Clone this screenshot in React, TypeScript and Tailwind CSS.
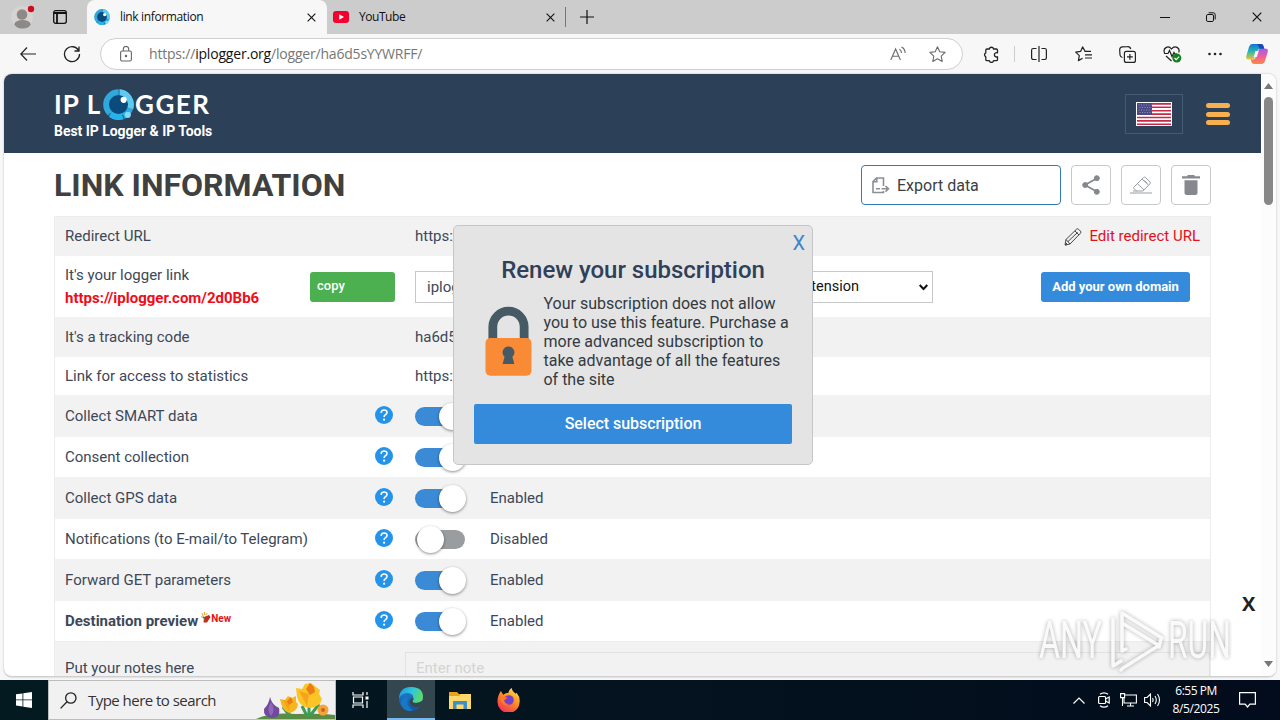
import type { ReactNode } from 'react';

const Cross = ({ size = 10 }: { size?: number }) => (
  <svg width={size} height={size} viewBox="0 0 10 10" stroke="#111" strokeWidth="1.2" fill="none">
    <path d="M.7.7l8.6 8.6M9.3.7L.7 9.3" />
  </svg>
);

const EyeLogo = ({ size }: { size: number }) => (
  <svg width={size} height={size} viewBox="0 0 30 30" className="shrink-0">
    <circle cx="15" cy="15" r="12" fill="#0b4a7c" />
    <circle cx="15" cy="15" r="12" fill="none" stroke="#2fa8dc" strokeWidth="5.6" />
    <path d="M15 3a12 12 0 0 1 11.5 15.5" fill="none" stroke="#5ccbf2" strokeWidth="5.6" />
    <path d="M22 25A12 12 0 0 1 8 25" fill="none" stroke="#25b4ea" strokeWidth="5.6" />
    <path d="M15.500 0v6M7 23.500l-2 3M19 25l1.500 4" stroke="#173f63" strokeWidth=".8" />
    <circle cx="24" cy="25" r="3" fill="#7fdcf8" />
    <circle cx="20" cy="10.500" r="3" fill="#fff" />
  </svg>
);

function TabStrip() {
  return (
    <div className="flex h-[34px] bg-[#cccccc] text-xs text-[#111]">
      <div className="flex w-[87px] items-center rounded-br-lg pl-[11px]">
        <svg width="26" height="26" viewBox="0 0 26 26">
          <circle cx="11" cy="13" r="11" fill="#d6d3d1" />
          <circle cx="11" cy="10.5" r="5.3" fill="#8d8986" />
          <ellipse cx="11.5" cy="20.3" rx="8" ry="4.2" fill="#8d8986" />
          <circle cx="20" cy="5" r="3.2" fill="#d10a1f" />
        </svg>
        <svg width="14" height="14" viewBox="0 0 14 14" className="ml-[16px]" fill="none" stroke="#111" strokeWidth="1.3">
          <rect x=".7" y=".7" width="12.6" height="12.6" rx="2" />
          <path d="M1 3h12M4 3v10" strokeWidth="1.8" />
        </svg>
      </div>
      <div className="flex w-[240px] items-center rounded-t-lg bg-[#f7f7f7] pl-[7px] pr-[11px]">
        <EyeLogo size={16} />
        <span className="ml-[10px] flex-1 tracking-[-0.36px]">link information</span>
        <Cross size={9} />
      </div>
      <div className="flex w-[239px] items-center pl-[6px] pr-[11px]">
        <svg width="16" height="12" viewBox="0 0 16 12">
          <rect width="16" height="12" rx="3" fill="#f4002f" />
          <path d="M6.2 3.2v5.6L11 6z" fill="#fff" />
        </svg>
        <span className="ml-[10px] flex-1 tracking-[-0.45px]">YouTube</span>
        <Cross size={9} />
      </div>
      <div className="-ml-px flex flex-1 items-center">
        <div className="h-5 w-px bg-[#777]" />
        <svg width="14" height="14" viewBox="0 0 14 14" className="ml-[14px]" stroke="#111" strokeWidth="1.2">
          <path d="M7 0v14M0 7h14" />
        </svg>
      </div>
      <div className="flex w-[122px] items-center gap-9 pl-[2px]">
        <svg width="10" height="10" viewBox="0 0 10 10" stroke="#111"><path d="M0 5.5h10" /></svg>
        <svg width="10" height="10" viewBox="0 0 10 10" stroke="#111" fill="none">
          <rect x=".5" y="2.5" width="7" height="7" rx="1.4" />
          <path d="M2.6 .8h4.6a2 2 0 0 1 2 2v4.6" />
        </svg>
        <Cross size={10} />
      </div>
    </div>
  );
}

function Toolbar() {
  return (
    <div className="flex h-10 items-center bg-[#f7f7f7] pl-5">
      <svg width="16" height="14" viewBox="0 0 16 14" fill="none" stroke="#222" strokeWidth="1.2"><path d="M7 .5L.8 7 7 13.500M1 7h15" /></svg>
      <svg width="18" height="18" viewBox="0 0 18 18" className="ml-[27px]" fill="none" stroke="#222" strokeWidth="1.3">
        <path d="M15.800 6A7.500 7.500 0 1 0 16.500 9M16 1.500V6h-4.500" />
      </svg>
      <div className="ml-[19px] flex h-[32px] w-[863px] items-center rounded-full border border-[#cfcfcf] bg-white pl-[19px] pr-[16px]">
        <svg width="12" height="16" viewBox="0 0 12 16" fill="none" stroke="#666" strokeWidth="1.1">
          <rect x=".6" y="5" width="10.800" height="10" rx="1.600" /><path d="M3.300 5V3.200a2.700 2.700 0 0 1 5.400 0V5" /><circle cx="6" cy="10" r=".7" fill="#555" />
        </svg>
        <span className="ml-[17px] flex-1 text-[14px] leading-5 tracking-[-0.2px] text-[#767676]">
          https://<span className="text-[#111]">iplogger.org</span>/logger/ha6d5sYYWRFF/
        </span>
        <svg width="16" height="16" viewBox="0 0 16 16" fill="none" stroke="#6b6b6b" strokeWidth="1.100">
          <path d="M.8 14L5.600 3l4.800 11M2.500 10.200h6.300M9.300 3.300c1.500.8 2.200 2 2.200 3.700M11.500 1c2.500 1.200 3.600 3.200 3.600 6" />
        </svg>
        <svg width="17" height="16" viewBox="0 0 17 16" className="ml-[23px]" fill="none" stroke="#6b6b6b" strokeWidth="1.100" strokeLinejoin="round">
          <path d="M8.500.8l2.300 4.900 5.300.7-3.900 3.700 1 5.300-4.700-2.600-4.700 2.600 1-5.300L.9 6.400l5.300-.7z" />
        </svg>
      </div>
      <svg width="16" height="17" viewBox="0 0 16 17" className="ml-[20px]" fill="none" stroke="#222" strokeWidth="1.300" strokeLinejoin="round">
        <path d="M4 3h2.300a2.200 2.200 0 0 1 4.300 0h2.700q1.200 0 1.200 1.200V6.800a2.200 2.200 0 1 0 0 4v2.700q0 1.200-1.200 1.200h-2.700a2.200 2.200 0 0 1-4.300 0H4q-1.200 0-1.200-1.200V10.800a2.200 2.200 0 0 1 0-4V4.200Q2.800 3 4 3z" />
      </svg>
      <div className="ml-[15px] h-4 w-px bg-[#ccc]" />
      <svg width="16" height="16" viewBox="0 0 16 16" className="ml-[16px]" fill="none" stroke="#222" strokeWidth="1.200">
        <path d="M5.500 2.500h-3.200a1.700 1.700 0 0 0-1.700 1.700v7.600a1.700 1.700 0 0 0 1.700 1.700h3.200M10.500 2.500h3.200a1.700 1.700 0 0 1 1.700 1.700v7.600a1.700 1.700 0 0 1-1.700 1.700h-3.200M8 0v16" />
      </svg>
      <svg width="17" height="16" viewBox="0 0 17 16" className="ml-[28px]" fill="none" stroke="#222" strokeWidth="1.200" strokeLinejoin="round">
        <path d="M10 5.100L7.600.9 5.600 5.400.7 6.100l3.600 3.500-.9 5 4.200-2.300M9.500 5.300H16M10 8.800h7M10 12h7" />
      </svg>
      <svg width="17" height="17" viewBox="0 0 17 17" className="ml-[27px]" fill="none" stroke="#222" strokeWidth="1.200">
        <rect x="5.400" y="5.400" width="11" height="11" rx="2" />
        <path d="M10.900 8v5.800M8 10.900h5.800M3.500 11.500A3 3 0 0 1 1 9L.7 4A3 3 0 0 1 3 .9L8.500.7A3 3 0 0 1 11.700 3" />
      </svg>
      <svg width="19" height="17" viewBox="0 0 19 17" className="ml-[27px]" fill="none" stroke="#222" strokeWidth="1.200">
        <path d="M1.600 7C-.5 2.500 5-1.500 8.500 3 12-1.500 17.500 2 15.700 6.500M1 7.500h4l1.500-3 2.500 6 2-4 1 1.500h2M3 10l5.500 5" />
        <circle cx="13.800" cy="12" r="4.500" fill="#14801f" stroke="none" /><path d="M11.500 12l1.700 1.700 3-3" stroke="#fff" />
      </svg>
      <svg width="14" height="4" viewBox="0 0 14 4" className="ml-[26px]" fill="#222"><circle cx="1.500" cy="2" r="1.300" /><circle cx="7" cy="2" r="1.300" /><circle cx="12.500" cy="2" r="1.300" /></svg>
      <svg width="22" height="20" viewBox="0 0 22 20" className="ml-[24px]">
        <defs>
          <linearGradient id="cpA" x1="0" y1="0" x2="0" y2="1"><stop stopColor="#1374d8" /><stop offset=".5" stopColor="#2bb8b0" /><stop offset="1" stopColor="#f0c42c" /></linearGradient>
          <linearGradient id="cpB" x1="0" y1="0" x2="0" y2="1"><stop stopColor="#a45bea" /><stop offset=".5" stopColor="#ea5fa0" /><stop offset="1" stopColor="#ff8a3c" /></linearGradient>
        </defs>
        <path d="M6 0h9q2 0 2.500 2l.7 3H14q-2 0-2.700 2L9 13q-.8 2.500-3 2.500H3Q-.5 15.500.3 12L3 3Q4 0 6 0z" fill="url(#cpA)" />
        <path d="M16 20H8q-2 0-2.500-2l-.8-2.500H7q2 0 2.800-2.500L12 7q.8-2.500 3-2.500h4Q22.500 4.500 21.700 8L19 17q-1 3-3 3z" fill="url(#cpB)" />
        <path d="M11 0h4q2 0 2.500 2l.7 2.700H14z" fill="#1b49b8" />
        <path d="M9.500 7h3.300l-2 6H7.600z" fill="#f7f7f7" />
      </svg>
    </div>
  );
}

function SiteHeader() {
  return (
    <header className="flex h-[79px] shrink-0 items-start bg-[#2c4058] pl-[50px] pr-[31px]">
      <div className="flex-1 pt-[14px] text-white">
        <div className="flex h-[32px] items-center font-['Lato',sans-serif] text-[26px] font-bold leading-none">
          <span className="w-[49px] whitespace-pre tracking-[1.1px]">IP L</span>
          <EyeLogo size={31} />
          <span className="ml-[1px] tracking-[1.5px]">GGER</span>
        </div>
        <p className="mt-[3px] text-[14px] font-bold leading-4 tracking-[-0.04px]">Best IP Logger &amp; IP Tools</p>
      </div>
      <div className="mt-5 flex h-10 w-[58px] items-center justify-center border border-[#435b74]">
        <svg width="36" height="24" viewBox="0 0 36 24">
          <rect width="36" height="24" fill="#fff" />
          <path d="M1 1.900h34M1 5.300h34M1 8.700h34M1 12.100h34M1 15.500h34M1 18.900h34M1 22.300h34" stroke="#c42b48" strokeWidth="1.600" />
          <rect x="1" y="1" width="15" height="12" fill="#494a85" />
          <path d="M2.500 3h13M3.500 5.500h12M2.500 8h13M3.500 10.500h12" stroke="#a5a5cc" strokeWidth=".8" strokeDasharray="1 1.500" />
        </svg>
      </div>
      <div className="ml-[23px] mt-[29px] flex w-6 flex-col gap-[3.500px]">
        <div className="h-[5px] rounded-full bg-[#f8b04e]" />
        <div className="h-[5px] rounded-full bg-[#f8b04e]" />
        <div className="h-[5px] rounded-full bg-[#f8b04e]" />
      </div>
    </header>
  );
}

const IconButton = ({ children }: { children: ReactNode }) => (
  <button className="flex size-10 items-center justify-center rounded-[4px] border border-[#c6c9cc] bg-white">{children}</button>
);

function TitleRow() {
  return (
    <div className="flex h-[63px] items-start pt-3">
      <h1 className="flex-1 text-[32px] font-bold leading-10 text-[#404040]">LINK INFORMATION</h1>
      <div className="flex gap-[10px]">
        <button className="flex h-10 w-[200px] items-center rounded-[4px] border border-[#337ab7] pl-[10px] pt-px text-[16px] text-[#3b3f44]">
          <svg width="18" height="17" viewBox="0 0 18 17" fill="none" stroke="#8b8f94" strokeWidth="1.600">
            <path d="M11.500 9V1H4.500L1 4.500V15.500h10.500V14M4.800 1v3.700H1M4 11.800h4M9.500 11.800h7M13.500 9l3 2.800-3 2.800" />
          </svg>
          <span className="ml-[7px]">Export data</span>
        </button>
        <IconButton>
          <svg width="18" height="20" viewBox="0 0 18 20" fill="#85898e" stroke="#85898e"><circle cx="14.800" cy="3.200" r="2.500" /><circle cx="3.200" cy="10" r="2.500" /><circle cx="14.800" cy="16.800" r="2.500" /><path d="M15 3.200L3 10l12 6.800" fill="none" strokeWidth="1.800" /></svg>
        </IconButton>
        <IconButton>
          <svg width="22" height="18" viewBox="0 0 22 18" fill="none" stroke="#9a9da1" strokeWidth="1" strokeLinejoin="round">
            <path d="M3.500 11.500L13.500 1.500q1-.8 2 0l4.500 4.500q.8 1 0 1.800L13 15H6.500l-3-3zM7.500 7.800l6.500 6M12 3l6.500 6M0 17h22M3 15h4M14.500 4.500l3 3" />
          </svg>
        </IconButton>
        <IconButton>
          <svg width="18" height="20" viewBox="0 0 18 20" fill="#85898e"><path d="M0 1.300h5.500V0h7v1.300H18V3.600H0zM2.500 5.200h13V18q0 2-2 2h-9q-2 0-2-2z" /></svg>
        </IconButton>
      </div>
    </div>
  );
}

const Help = () => (
  <svg width="18" height="18" viewBox="0 0 18 18" className="mb-[2px]">
    <circle cx="9" cy="9" r="9" fill="#2493ea" />
    <path d="M6.100 6.900q.1-2.900 3-2.900t2.900 2.500q0 1.300-1.500 2.200-1.400.9-1.400 2.300" fill="none" stroke="#fff" strokeWidth="1.600" />
    <circle cx="9.100" cy="13.700" r="1.100" fill="#fff" />
  </svg>
);

const Toggle = ({ on }: { on: boolean }) => (
  <div className={`mt-px flex h-[19px] w-[50px] items-center rounded-full ${on ? 'bg-[#3a8ad6] pl-[24px]' : 'bg-[#9a9da0] pl-[2px]'}`}>
    <div className="size-[27px] shrink-0 rounded-full bg-white shadow-[0_1px_3px_rgba(0,0,0,0.45)]" />
  </div>
);

const Firecracker = () => (
  <svg width="10" height="11" viewBox="0 0 10 11" className="mb-[7px] ml-[3px]">
    <path d="M1 1l1 3M3.500 0v3M0 4.500l2 1M6 1L5 3" stroke="#e9a63a" strokeWidth="1" />
    <path d="M3 5l5-2 1.500 2-3.500 5.500H2.500z" fill="#c42a1c" /><path d="M2 4.500l2.500 4" stroke="#5d7d32" strokeWidth="1.300" />
  </svg>
);

type Setting = { label: string; on: boolean; height: string; bg: string; isNew?: boolean };
const settings: Setting[] = [
  { label: 'Collect SMART data', on: true, height: 'h-[42px]', bg: 'bg-[#f2f2f2]' },
  { label: 'Consent collection', on: true, height: 'h-[40px]', bg: 'bg-white' },
  { label: 'Collect GPS data', on: true, height: 'h-[42px]', bg: 'bg-[#f2f2f2]' },
  { label: 'Notifications (to E-mail/to Telegram)', on: false, height: 'h-[40px]', bg: 'bg-white' },
  { label: 'Forward GET parameters', on: true, height: 'h-[42px]', bg: 'bg-[#f2f2f2]' },
  { label: 'Destination preview', on: true, height: 'h-[40px]', bg: 'bg-white', isNew: true },
];

function InfoTable() {
  return (
    <div className="flex flex-1 flex-col border border-b-0 border-[#ececec] text-[15px] text-[#3c4859]">
      <div className="flex h-[39px] shrink-0 items-center bg-[#f2f2f2] px-[10px]">
        <span className="w-[350px]">Redirect URL</span>
        <span className="flex-1">https://</span>
        <svg width="18" height="18" viewBox="0 0 18 18" fill="none" stroke="#444" strokeWidth="1" strokeLinejoin="round">
          <path d="M1 17l1-5.500L12.500 1.200q1-.8 2 0l2 2q.8 1 0 2L6 16zM2 11.500L6 16M11 3l4 4M4 13.500L13.500 4.500M1 17l2.500-.5-2-2" />
        </svg>
        <span className="ml-[7px] text-[15px] text-[#e3111b]">Edit redirect URL</span>
      </div>
      <div className="flex h-[61px] shrink-0 items-center bg-white pl-[10px] pr-[20px]">
        <div className="w-[245px] leading-[23px]">
          <p>It&apos;s your logger link</p>
          <p className="font-bold text-[#f00c18]">https://iplogger.com/2d0Bb6</p>
        </div>
        <button className="mt-px flex h-[30px] w-[85px] items-center rounded-[3px] bg-[#4caf50] pb-[2px] pl-[7px] text-[13px] font-medium text-white">copy</button>
        <div className="ml-[20px] mt-px flex h-8 w-[185px] items-center border border-[#c8c8c8] pl-[11px]">iplogger.com</div>
        <div className="ml-[10px] mt-px flex h-8 w-[323px] items-center justify-end gap-[60px] border border-[#c8c8c8] pr-[4px] text-[14.500px] text-[#111]">
          <span>No extension</span>
          <svg width="9" height="7" viewBox="0 0 9 7" fill="none" stroke="#111" strokeWidth="2"><path d="M.7 1l3.800 4L8.300 1" /></svg>
        </div>
        <div className="flex-1" />
        <button className="mt-px h-[30px] w-[149px] rounded-[3px] bg-[#348bdb] text-[13px] font-bold text-white">Add your own domain</button>
      </div>
      <div className="flex h-[40px] shrink-0 items-center bg-[#f2f2f2] px-[10px]">
        <span className="w-[350px]">It&apos;s a tracking code</span><span>ha6d5sYYWRFF</span>
      </div>
      <div className="flex h-[38px] shrink-0 items-center bg-white px-[10px]">
        <span className="w-[350px]">Link for access to statistics</span><span>https://</span>
      </div>
      {settings.map((s) => (
        <div key={s.label} className={`flex shrink-0 items-center px-[10px] ${s.height} ${s.bg}`}>
          <div className="flex w-[310px] items-center">
            <span className={s.isNew ? 'font-bold' : ''}>{s.label}</span>
            {s.isNew && <><Firecracker /><span className="mb-[5px] text-[10px] font-bold text-[#e3111b]">New</span></>}
          </div>
          <Help />
          <div className="ml-[22px]"><Toggle on={s.on} /></div>
          <span className="ml-[25px]">{s.on ? 'Enabled' : 'Disabled'}</span>
        </div>
      ))}
      <div className="flex flex-1 items-start border-t border-[#ececec] bg-[#f2f2f2] pl-[10px]">
        <span className="w-[340px] pt-[15px]">Put your notes here</span>
        <div className="mt-[10px] h-10 flex-1 border border-[#e2e2e2] pl-[10px] pt-[4px] text-[#d4d4d4]">Enter note</div>
      </div>
    </div>
  );
}

function Modal() {
  return (
    <div className="absolute left-[453px] top-[225px] h-[240px] w-[360px] rounded-[5px] border border-[#c4c6c9] bg-[#e4e4e4] px-5 text-[#333a42]">
      <div className="-mr-[13px] flex h-[26px] justify-end pt-[5px] text-[20px] leading-6 text-[#3b87cf]">X</div>
      <h2 className="mt-[2px] text-center text-[24px] font-medium leading-8 tracking-[-0.02px] text-[#2f4058]">Renew your subscription</h2>
      <div className="mt-[8px] flex pl-[11px]">
        <svg width="48" height="71" viewBox="0 0 48 71" className="mt-[12px]">
          <path d="M8 34V20.500a16 16 0 0 1 32 0v13.500" fill="none" stroke="#455a64" strokeWidth="9" />
          <rect x=".5" y="32" width="47" height="38.500" rx="5" fill="#f98a36" />
          <path d="M24 40.500a6 6 0 0 1 4 10.500l2 7.500h-12L20 51a6 6 0 0 1 4-10.500z" fill="#455a64" />
        </svg>
        <p className="ml-[11.500px] w-[254px] text-[16px] leading-[19px]">Your subscription does not allow you to use this feature. Purchase a more advanced subscription to take advantage of all the features of the site</p>
      </div>
      <button className="mt-[15px] h-10 w-full rounded-[2px] bg-[#348bdb] text-[16px] font-medium tracking-[-0.04px] text-white">Select subscription</button>
    </div>
  );
}

const Watermark = () => (
  <svg width="200" height="66" viewBox="0 0 200 66" className="absolute left-[1035px] top-[608px] overflow-visible opacity-90 drop-shadow-[0_0_2px_rgba(0,0,0,0.35)]">
    <g fill="#fafafa" fontFamily="Roboto, sans-serif" fontSize="51" fontWeight="400">
      <text x="4" y="50" textLength="63" lengthAdjust="spacingAndGlyphs">ANY</text>
      <text x="133" y="50" textLength="63" lengthAdjust="spacingAndGlyphs">RUN</text>
    </g>
    <g fill="none" stroke="#fafafa" strokeWidth="3.500" strokeLinejoin="round" strokeLinecap="round">
      <path d="M87 43V5l40 25M87 15l36 22M78 11v47l8-5M87 43l4-2" />
      <path d="M123 38L88 60M126 31l-2 8M88 60l-2 2" />
    </g>
  </svg>
);

function Taskbar() {
  return (
    <div className="flex h-10 bg-[linear-gradient(90deg,#031a20,#04131f_50%,#020c1c)] text-white">
      <div className="flex w-12 items-center justify-center">
        <svg width="16" height="16" viewBox="0 0 16 16" fill="#fff"><path d="M0 2.300l6.500-.9v6.100H0zM7.300 1.300L16 0v7.500H7.300zM0 8.300h6.500v6.200L0 13.600zM7.300 8.300H16V16l-8.700-1.300z" /></svg>
      </div>
      <div className="flex w-[288px] items-center border border-[#bdbdbd] bg-[#f1f1f1] pl-[11px]">
        <svg width="17" height="17" viewBox="0 0 17 17" fill="none" stroke="#222" strokeWidth="1.300"><circle cx="10.800" cy="6" r="5.200" /><path d="M7 9.800L.6 16.400" /></svg>
        <span className="ml-[11px] flex-1 text-[15px] tracking-[-0.53px] text-[#333]">Type here to search</span>
        <svg width="79" height="38" viewBox="0 0 79 38" className="shrink-0">
          <path d="M0 38Q15 31 40 33 65 32 79 34v4z" fill="#5d8b45" />
          <path d="M33 36V28M53 36V24M54 35l9-12M33 34l-6-8M51 35l-5-10" stroke="#3f9b52" strokeWidth="3" fill="none" />
          <path d="M14 16q2 8 9 11 2 10-7 10-9-1-8-9 5-5 6-12z" fill="#714a9e" /><path d="M15 21q5 8 0 14-5-6 0-14z" fill="#8f68b8" />
          <path d="M24 18l5 1 3-4 4 2 4-2v6l2 2q-1 8-9 9-7-2-9-14z" fill="#f7b61d" />
          <path d="M27 19l6 11 1-9zM40 19l-6 11z" fill="#f2a216" />
          <path d="M40 7l6 1 3-5 6-1 5 4 4 3-1 4 3 5q-2 8-12 9-10 0-13-11z" fill="#fbc526" />
          <path d="M43 10l8 15 2-12zM62 11L53 26z" fill="#f3a51b" />
          <path d="M50 8l4-6 4 4 1 5-5 3zM31 20l4-4 2 5-4 3z" fill="#ec7c16" />
          <circle cx="67" cy="29" r="5.500" fill="#f5a43c" /><circle cx="67" cy="29" r="2" fill="#c96518" />
        </svg>
      </div>
      <div className="flex w-[51px] items-center justify-center pr-[3px]">
        <svg width="17" height="16" viewBox="0 0 17 16" fill="none" stroke="#fff" strokeWidth="1.200"><path d="M1 0v3h10V0M1 16v-3h10v3M1.500 5h9v6h-9zM15 0v3M15 9v7" /><path d="M13.500 6h3" strokeWidth="3" /></svg>
      </div>
      <div className="flex w-12 items-center justify-center border-b-2 border-[#76b9ed] bg-[#34474e]">
        <svg width="24" height="24" viewBox="0 0 24 24">
          <defs>
            <linearGradient id="eg1" x1="0" y1=".3" x2="1" y2=".6"><stop stopColor="#249be0" /><stop offset=".5" stopColor="#30c7d8" /><stop offset="1" stopColor="#62dc5e" /></linearGradient>
            <linearGradient id="eg2" x1="0" y1="0" x2="0" y2="1"><stop stopColor="#1c84d0" /><stop offset="1" stopColor="#1353a3" /></linearGradient>
          </defs>
          <circle cx="12" cy="12" r="12" fill="url(#eg2)" />
          <path d="M0 11Q1 0 12 0q12 0 12 10 0 6-7 6-5 0-3-3 2-6-5-7Q3 6 0 11z" fill="url(#eg1)" />
          <path d="M14 13q-2 3 3 3 4 0 7-3-.5 4.500-2.500 6-3 2-6.500 1-5-2-4.500-6 1-2.500 3-3 2 0 .5 2z" fill="#34474e" />
          <path d="M10 10q-5 7 4 13.500-9 2-12-6Q1 10 10 10z" fill="#1878c5" />
        </svg>
      </div>
      <div className="flex w-[49px] items-center justify-center">
        <svg width="22" height="19" viewBox="0 0 22 19"><path d="M0 1h8l2 2h12v15H0z" fill="#eaa31d" /><path d="M0 5h10l2-2h10v15H0z" fill="#ffd969" /><path d="M4 18V10h14v8h-3.500v-4.500h-7V18z" fill="#3f8fc9" /></svg>
      </div>
      <div className="flex w-[49px] items-center justify-center">
        <svg width="23" height="24" viewBox="0 0 24 25">
          <defs><linearGradient id="ffg" x1=".8" y1="0" x2=".2" y2="1"><stop stopColor="#ffe34c" /><stop offset=".45" stopColor="#ff8a26" /><stop offset="1" stopColor="#f22a5d" /></linearGradient></defs>
          <path d="M4 3l2.500 4q2.500-2 5.500-2 0-3 3.500-5 0 3 4 6l1-1q4 5 3 10A11.500 11.500 0 0 1 .5 14Q.5 8 4 3z" fill="url(#ffg)" />
          <circle cx="12.500" cy="12.500" r="5" fill="#7541c9" /><path d="M3 11q4-3 8-.5l-4 2.500q1 4 6 3.500-7 4-10-5.500z" fill="#ff7a2b" />
        </svg>
      </div>
      <div className="flex-1" />
      <div className="flex w-[207px] items-center">
        <svg width="12" height="7" viewBox="0 0 12 7" fill="none" stroke="#fff" strokeWidth="1.200"><path d="M.5 6.500L6 1l5.500 5.500" /></svg>
        <svg width="12" height="16" viewBox="0 0 12 16" className="ml-[13px]" fill="none" stroke="#fff" strokeWidth="1.200"><rect x=".6" y="4.500" width="7" height="7" rx="1" /><path d="M7.600 7l3.600-2v6l-3.600-2M2 2.300Q6-.5 10 2.300M2 13.700q4 2.800 8 0" /></svg>
        <svg width="17" height="14" viewBox="0 0 17 14" className="ml-[10px]" fill="none" stroke="#fff" strokeWidth="1.100"><path d="M5 2h11.400v8H4V5M.6.600h4v4h-4zM2.500 4.500V13M7 13h7M10.500 10v3" /></svg>
        <svg width="17" height="14" viewBox="0 0 17 14" className="ml-[7px]" fill="none" stroke="#fff" strokeWidth="1.100"><path d="M.6 4.500h2.500L6.500 1v12L3.100 9.500H.6zM8.500 5q1.200 2 0 4M11 3q2.600 4 0 8M13.500 1q4 6 0 12" /></svg>
        <div className="ml-[10px] w-[50px] text-center text-[12px] leading-[18px] tracking-[-0.5px]"><p>6:55 PM</p><p className="whitespace-nowrap tracking-[-0.4px]">8/5/2025</p></div>
        <svg width="17" height="16" viewBox="0 0 17 16" className="ml-[18px]" fill="none" stroke="#fff" strokeWidth="1.200"><path d="M.6.600h15.800v11.500h-5.500L8.500 15l-2.400-2.900H.6z" /></svg>
      </div>
    </div>
  );
}

export default function App() {
  return (
    <div className="relative flex h-[720px] w-[1280px] flex-col overflow-hidden bg-[#f7f7f7] font-['Roboto',sans-serif]">
      <div className="font-['Open_Sans','Noto_Sans',sans-serif]"><TabStrip /><Toolbar /></div>
      <div className="mx-1 flex h-[603px] overflow-hidden rounded-[8px] border-b border-[#cfcfcf] bg-white shadow-[0_0_2px_rgba(0,0,0,0.3)]">
        <div className="flex w-[1257px] flex-col">
          <SiteHeader />
          <main className="flex flex-1 flex-col pl-[50px] pr-[50px]"><TitleRow /><InfoTable /></main>
        </div>
        <div className="flex w-[15px] flex-col items-center bg-[#fcfcfc] py-[9px]">
          <svg width="9" height="6" viewBox="0 0 9 6" fill="#777"><path d="M0 6l4.500-6L9 6z" /></svg>
          <div className="mt-[8px] h-[108px] w-[9px] rounded-full bg-[#878787]" />
          <div className="flex-1" />
          <svg width="9" height="6" viewBox="0 0 9 6" fill="#777"><path d="M0 0l4.500 6L9 0z" /></svg>
        </div>
      </div>
      <div className="h-[3px]" />
      <div className="font-['Open_Sans','Noto_Sans',sans-serif]"><Taskbar /></div>
      <Modal />
      <div className="absolute left-[1242px] top-[592px] font-['Open_Sans',sans-serif] text-[20px] font-bold leading-6 text-[#222]">X</div>
      <Watermark />
    </div>
  );
}
